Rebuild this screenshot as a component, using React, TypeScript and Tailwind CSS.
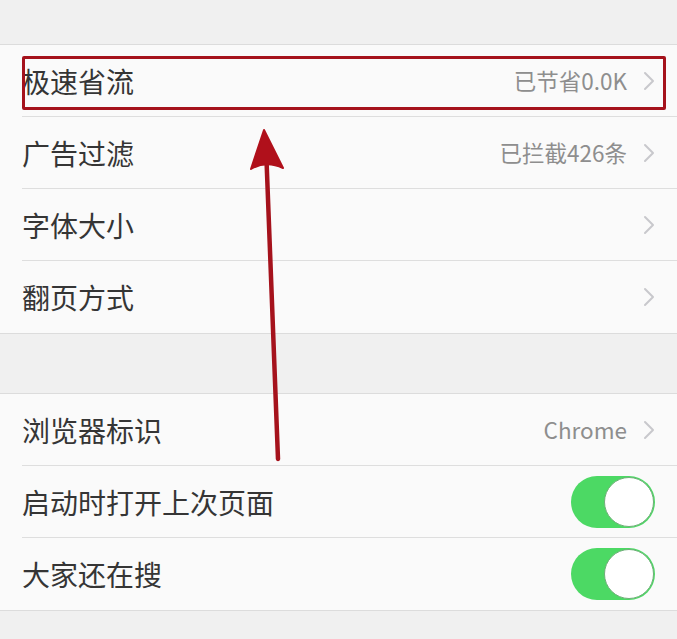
import React from "react";

const font = { fontFamily: '"Noto Sans CJK SC", "Noto Sans", sans-serif' };

function Chevron() {
  return (
    <svg width="12" height="20" viewBox="0 0 12 20" className="shrink-0">
      <path d="M2 2 L10 10 L2 18" fill="none" stroke="#c8c8cc" strokeWidth="2" strokeLinecap="round" strokeLinejoin="round" />
    </svg>
  );
}

function Toggle() {
  return (
    <div className="w-[84px] h-[52px] rounded-full bg-[#4cd964] flex items-center justify-end p-[1px] shrink-0">
      <div className="w-[50px] h-[50px] rounded-full bg-white border-[1.5px] border-[#6fae78]" />
    </div>
  );
}

function Row({ label, value, chevron, toggle, last }: { label: string; value?: string; chevron?: boolean; toggle?: boolean; last?: boolean }) {
  return (
    <div className="pl-[22px] bg-[#fafafa]">
      <div className={`h-[72px] flex items-center pr-[22px] ${last ? "" : "border-b border-[#dedede]"}`}>
        <span className="text-[28px] text-[#353535] flex-1 leading-none">{label}</span>
        {value && <span className="text-[22.5px] text-[#8e8e8e] mr-[16px] leading-none">{value}</span>}
        {chevron && <Chevron />}
        {toggle && <Toggle />}
      </div>
    </div>
  );
}

export default function App() {
  return (
    <div className="relative w-[677px] h-[639px] bg-[#f0f0f0] overflow-hidden" style={font}>
      <div className="h-[44px]" />
      <div className="border-y border-[#dcdcdc]">
        <Row label="极速省流" value="已节省0.0K" chevron />
        <Row label="广告过滤" value="已拦截426条" chevron />
        <Row label="字体大小" chevron />
        <Row label="翻页方式" chevron last />
      </div>
      <div className="h-[59px]" />
      <div className="border-y border-[#dcdcdc]">
        <Row label="浏览器标识" value="Chrome" chevron />
        <Row label="启动时打开上次页面" toggle />
        <Row label="大家还在搜" toggle last />
      </div>

      <div className="absolute left-[22px] top-[56px] w-[644px] h-[54px] border-[3.5px] border-[#a5121c] rounded-[2px]" />
      <svg className="absolute left-0 top-0" width="677" height="639" viewBox="0 0 677 639">
        <line x1="278" y1="459" x2="266.5" y2="160" stroke="#a5121c" strokeWidth="4.5" strokeLinecap="round" />
        <path d="M264 130 L283 168 Q266 160 251 169 Z" fill="#b0101b" stroke="#b0101b" strokeWidth="2" strokeLinejoin="round" />
      </svg>
    </div>
  );
}
